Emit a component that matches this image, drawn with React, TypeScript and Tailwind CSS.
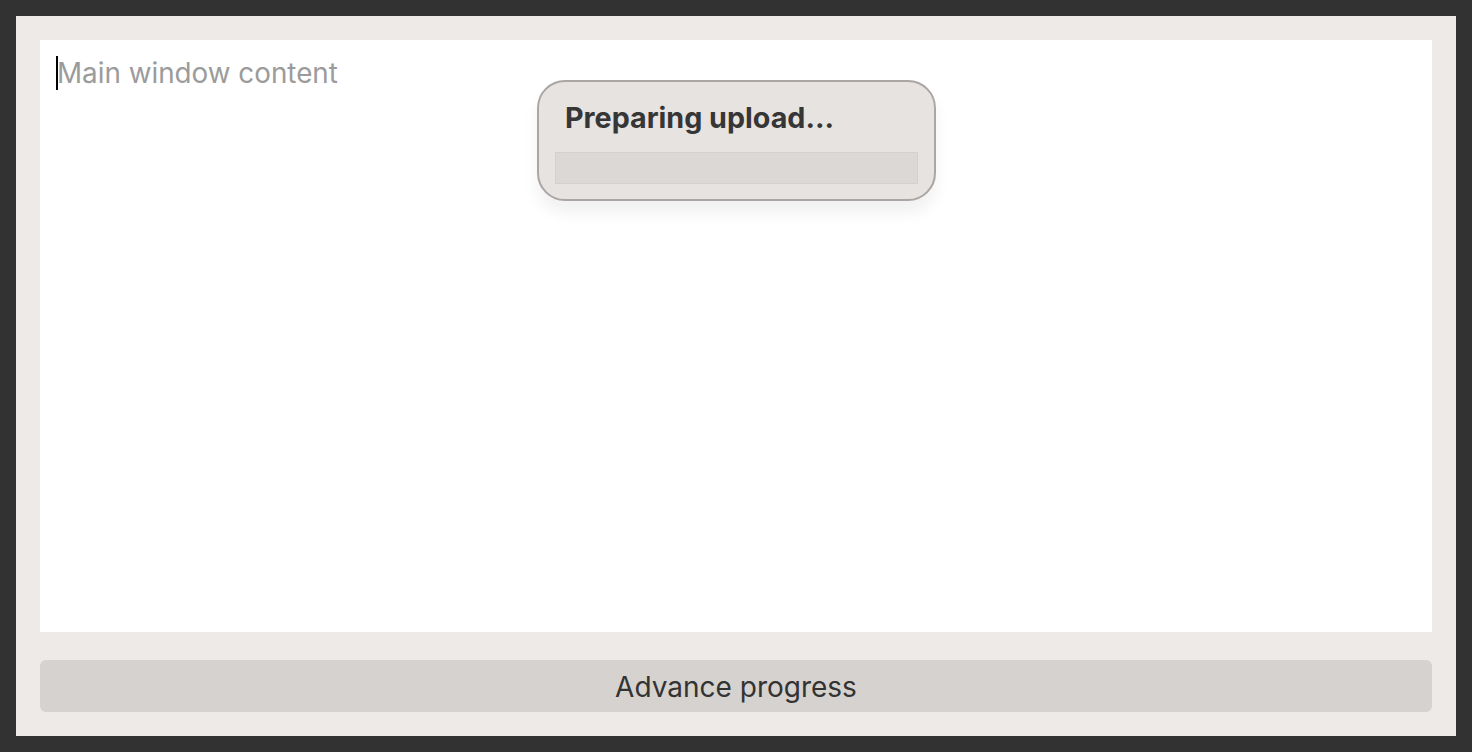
export default function App() {
  return (
    <div
      className="w-[1472px] h-[752px] bg-[#323232] p-4"
      style={{ fontFamily: "Inter, 'Noto Sans', sans-serif" }}
    >
      <div className="h-full bg-[#edeae7] px-6 pt-6 pb-6 flex flex-col">
        <div className="relative bg-white h-[592px]">
          <div className="flex items-center pt-4 pl-4">
            <span className="w-[2px] h-[34px] bg-black" />
            <span className="text-[27.8px] text-[#9b9b9b] leading-none -ml-px pt-[2px]">
              Main window content
            </span>
          </div>

          <div className="absolute left-[497px] top-[40px] w-[399px] h-[121px] rounded-[28px] border-2 border-[#aba6a3] bg-[#e6e3e1] shadow-[0_12px_16px_rgba(0,0,0,0.06)] px-4 pt-[22px]">
            <div className="pl-[10px] text-[28.7px] font-bold text-[#363636] leading-none">
              Preparing upload...
            </div>
            <div className="mt-[19px] h-8 bg-[#dcd8d6] border border-[#d5d1ce]" />
          </div>
        </div>

        <button className="mt-7 h-[52px] rounded-md bg-[#d6d2cf] text-[28px] text-[#333] flex items-center justify-center pt-[2px]">
          Advance progress
        </button>
      </div>
    </div>
  );
}
